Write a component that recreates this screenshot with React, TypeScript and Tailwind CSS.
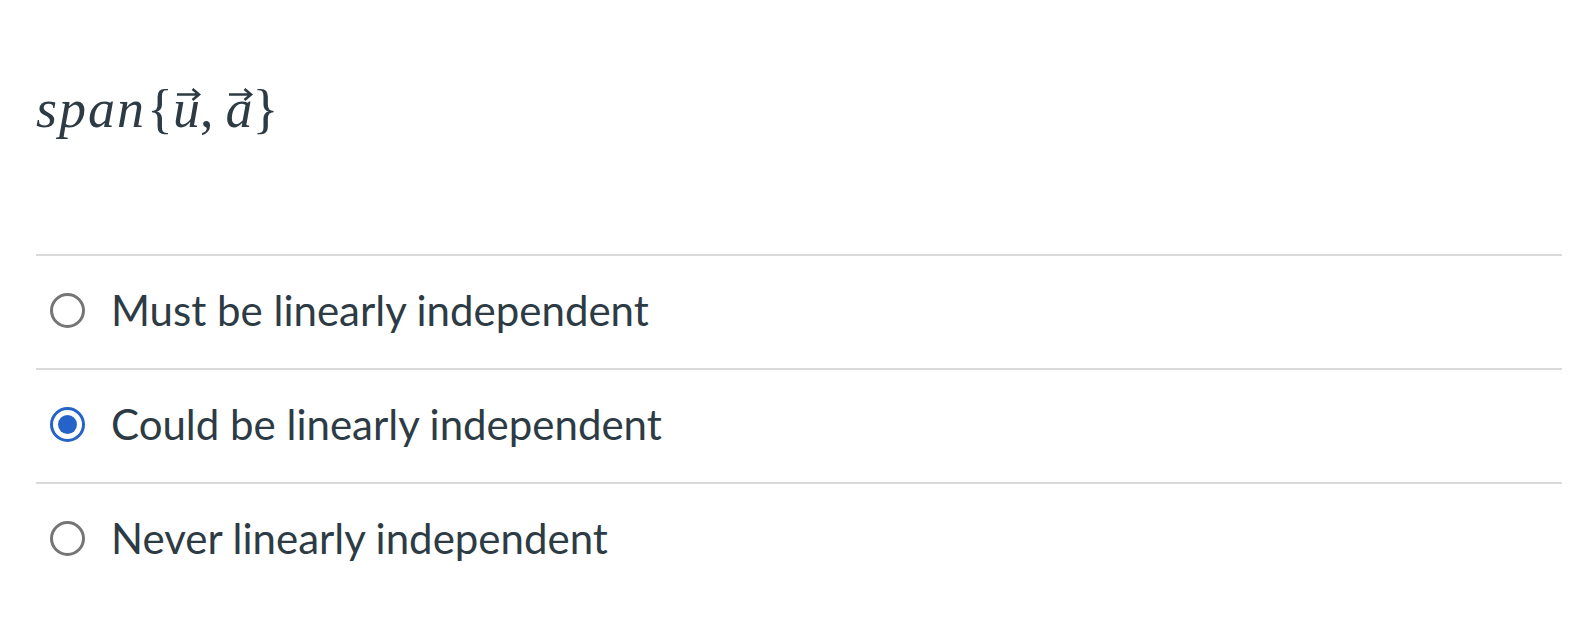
import React from 'react';

const options = [
  { label: 'Must be linearly independent', checked: false },
  { label: 'Could be linearly independent', checked: true },
  { label: 'Never linearly independent', checked: false },
];

const Vec: React.FC<{ letter: string }> = ({ letter }) => (
  <span className="relative inline-block">
    <span className="italic">{letter}</span>
    <svg className="absolute left-[3px] top-[13px] h-[14px] w-[26px]" viewBox="0 0 26 14" fill="none" stroke="#2d3b45" strokeWidth={2.6}>
      <path d="M1 7.5h22M16.5 2l6.5 5.5-6.5 5.5" />
    </svg>
  </span>
);

const Radio: React.FC<{ checked: boolean }> = ({ checked }) =>
  checked ? (
    <span className="flex h-[35px] w-[35px] shrink-0 items-center justify-center rounded-full border-[3px] border-[#2563c9]">
      <span className="h-[19px] w-[19px] rounded-full bg-[#2563c9]" />
    </span>
  ) : (
    <span className="block h-[35px] w-[35px] shrink-0 rounded-full border-[3px] border-[#757575]" />
  );

export default function App() {
  return (
    <div className="min-h-[638px] bg-white pl-[36px] pr-[18px] text-[#2d3b45]" style={{ fontFamily: 'Lato, "Open Sans", sans-serif' }}>
      <div className="h-[254px] pt-[74px]">
        <div className="text-[54px] leading-[70px]" style={{ fontFamily: '"Liberation Serif", "DejaVu Serif", serif' }}>
          <span className="italic tracking-[2px]">span</span>
          <span className="ml-[1px]">{'{'}</span>
          <Vec letter="u" />
          <span className="mr-[12px]">,</span>
          <Vec letter="a" />
          <span>{'}'}</span>
        </div>
      </div>
      <div>
        {options.map((o, i) => (
          <div key={i} className="flex h-[114px] items-center gap-[26px] border-t-[2px] border-[#dadada] pl-[14px] pb-[4px]">
            <Radio checked={o.checked} />
            <span className="text-[42px]">{o.label}</span>
          </div>
        ))}
      </div>
    </div>
  );
}
